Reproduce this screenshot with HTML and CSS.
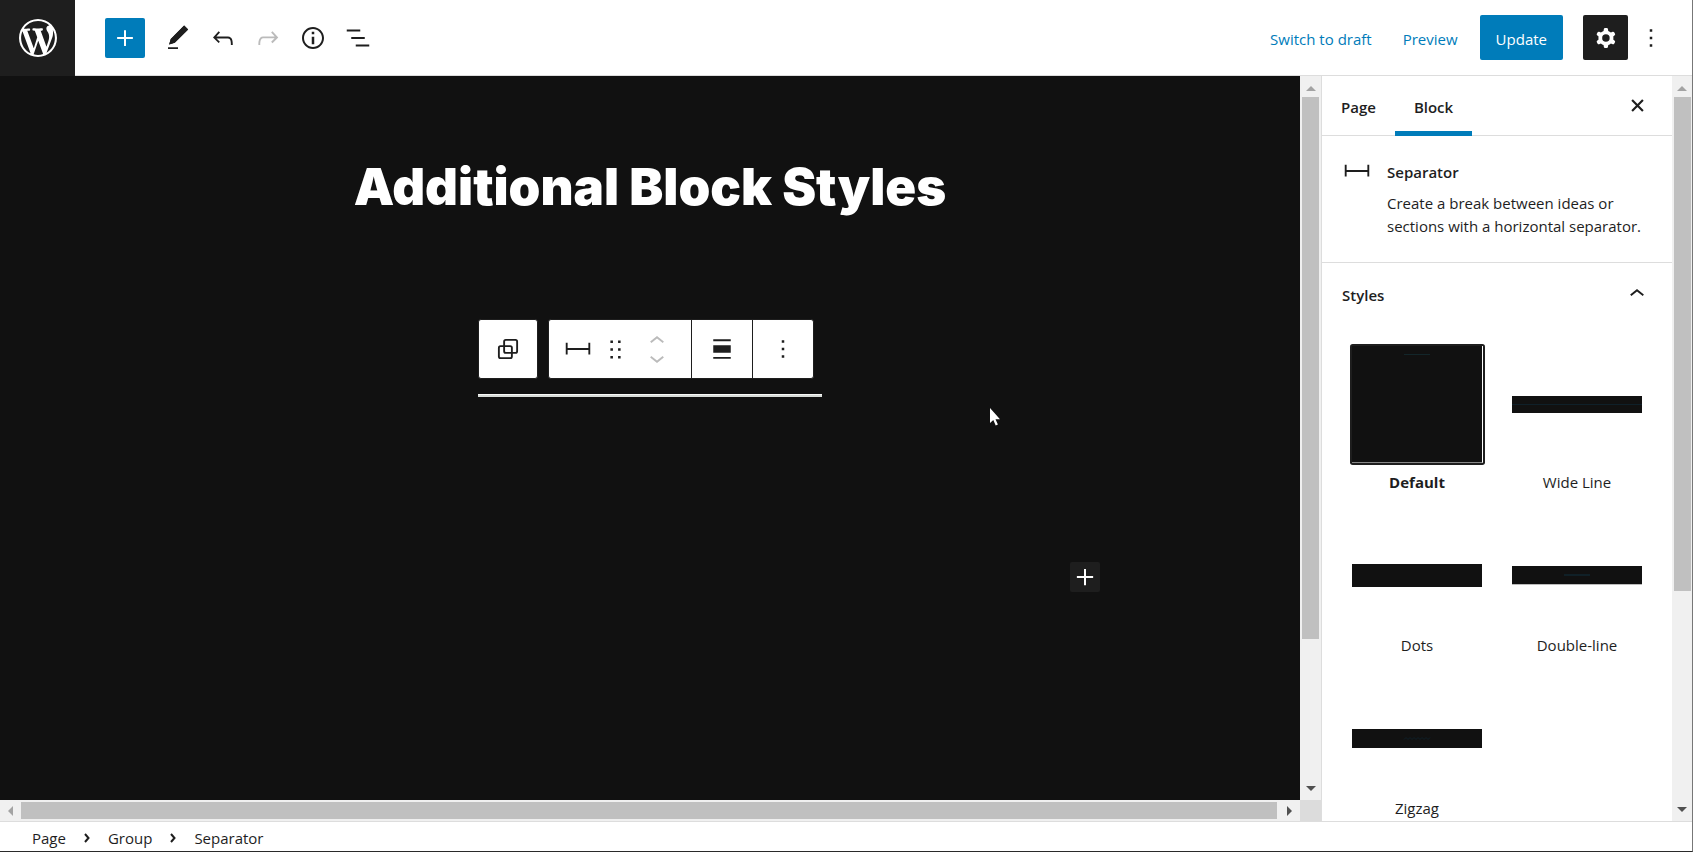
FILE: index.html
```html
<!DOCTYPE html>
<html lang="en">
<head>
<meta charset="utf-8">
<title>Edit Page</title>
<link rel="stylesheet" href="styles.css">
</head>
<body>
<div class="editor">
  <header class="header">
    <a class="logo" href="#" aria-label="View pages">
      <svg viewBox="0 0 20 20"><path d="M20 10c0-5.51-4.49-10-10-10C4.48 0 0 4.49 0 10c0 5.52 4.48 10 10 10 5.51 0 10-4.48 10-10zM7.78 15.37L4.37 6.22c.55-.02 1.17-.08 1.17-.08.5-.06.44-1.13-.06-1.11 0 0-1.45.11-2.37.11-.18 0-.37 0-.58-.01C4.12 2.69 6.87 1.11 10 1.11c2.33 0 4.45.87 6.05 2.34-.68-.11-1.65.39-1.65 1.58 0 .74.45 1.36.9 2.1.35.61.55 1.36.55 2.46 0 1.49-1.4 5-1.4 5l-3.03-8.37c.54-.02.82-.17.82-.17.5-.05.44-1.25-.06-1.22 0 0-1.44.12-2.38.12-.87 0-2.33-.12-2.33-.12-.5-.03-.56 1.2-.06 1.22l.92.08 1.26 3.41zM17.41 10c.24-.64.74-1.87.43-4.25.7 1.29 1.05 2.71 1.05 4.25 0 3.29-1.73 6.24-4.4 7.78.97-2.59 1.94-5.2 2.92-7.78zM6.1 18.09C3.12 16.65 1.11 13.53 1.11 10c0-1.3.23-2.48.72-3.59C3.25 10.3 4.67 14.2 6.1 18.09zm4.03-6.63l2.58 6.98c-.86.29-1.76.45-2.71.45-.79 0-1.57-.11-2.29-.33.81-2.38 1.62-4.74 2.42-7.1z"/></svg>
    </a>
    <div class="tools">
      <button class="add" aria-label="Toggle block inserter"><svg class="icon" viewBox="0 0 24 24"><path d="M18.300 11.200h-5.500V5.800h-1.600v5.400H5.700v1.600h5.500v5.500h1.600v-5.500h5.500z"/></svg></button>
      <button class="tool" aria-label="Tools"><svg class="icon" viewBox="0 0 24 24"><path d="M20.100 5.100L16.900 2 6.200 12.700l-1.300 4.400 4.500-1.300L20.100 5.100zM4 20.800h8v-1.500H4v1.500z"/><path d="M16.900 2l3.200 3.100L9.400 15.800l-4.500 1.300 1.300-4.400z"/></svg></button>
      <button class="tool" aria-label="Undo"><svg class="icon" viewBox="0 0 24 24"><path d="M18.300 11.700c-.6-.6-1.400-.9-2.300-.9H6.700l2.900-3.300-1.100-1-4.500 5L8.500 16l1-1-2.700-2.700H16c.5 0 .9.2 1.300.5 1 1 1 3.400 1 4.500v.3h1.500v-.2c0-1.500 0-4.300-1.500-5.700z"/></svg></button>
      <button class="tool" aria-label="Redo" disabled><svg class="icon" viewBox="0 0 24 24"><path d="M15.600 6.500l-1.100 1 2.900 3.300H8c-.9 0-1.700.3-2.300.9-1.400 1.500-1.400 4.200-1.400 5.600v.2h1.500v-.3c0-1.100 0-3.500 1-4.500.3-.3.7-.5 1.300-.5h9.200L14.500 15l1.100 1.100 4.600-4.600-4.600-5z"/></svg></button>
      <button class="tool" aria-label="Details"><svg class="icon" viewBox="0 0 24 24"><path d="M12 3.200c-4.800 0-8.800 3.900-8.800 8.800 0 4.800 3.900 8.800 8.800 8.800 4.800 0 8.800-3.900 8.800-8.800 0-4.800-4-8.800-8.800-8.800zm0 16c-4 0-7.200-3.300-7.200-7.200C4.800 8 8 4.800 12 4.800s7.200 3.300 7.200 7.200c0 4-3.200 7.200-7.200 7.200zM11 17h2v-6h-2v6zm0-8h2V7h-2v2z"/></svg></button>
      <button class="tool" aria-label="List view"><svg class="icon" viewBox="0 0 24 24"><path d="M13.800 5.200H3v1.500h10.800V5.200zm-3.600 12v1.500H21v-1.500H10.200zm7.200-6H6.600v1.500h10.800v-1.500z"/></svg></button>
    </div>
    <div class="settings">
      <button class="text-button">Switch to draft</button>
      <button class="text-button">Preview</button>
      <button class="primary">Update</button>
      <button class="gear" aria-label="Settings"><svg class="icon" viewBox="0 0 24 24"><path fill-rule="evenodd" d="M10.289 4.836A1 1 0 0111.275 4h1.306a1 1 0 01.987.836l.244 1.466c.787.26 1.503.679 2.108 1.218l1.393-.522a1 1 0 011.216.437l.653 1.130a1 1 0 01-.23 1.273l-1.148.944a6.025 6.025 0 010 2.435l1.149.946a1 1 0 01.23 1.272l-.653 1.130a1 1 0 01-1.216.437l-1.394-.522c-.605.540-1.320.958-2.108 1.218l-.244 1.466a1 1 0 01-.987.836h-1.306a1 1 0 01-.986-.836l-.244-1.466a5.995 5.995 0 01-2.108-1.218l-1.394.522a1 1 0 01-1.217-.436l-.653-1.131a1 1 0 01.23-1.272l1.149-.946a6.026 6.026 0 010-2.435l-1.148-.944a1 1 0 01-.23-1.272l.653-1.131a1 1 0 011.217-.437l1.393.522a5.994 5.994 0 012.108-1.218l.244-1.466zM14.929 12a3 3 0 11-6 0 3 3 0 016 0z"/></svg></button>
      <button class="more" aria-label="Options"><svg class="icon" viewBox="0 0 24 24"><path d="M13 19h-2v-2h2v2zm0-6h-2v-2h2v2zm0-6h-2V5h2v2z"/></svg></button>
    </div>
  </header>

  <div class="body">
    <div class="frame">
      <main class="canvas">
        <h1 class="title">Additional Block Styles</h1>
        <section class="block">
          <div class="toolbar">
            <div class="group">
              <button class="cell" aria-label="Select parent block: Group"><svg class="icon" viewBox="0 0 24 24"><g fill="none" stroke="#1e1e1e" stroke-width="1.500"><rect x="8.900" y="4.700" width="10.400" height="10.400" rx="1.300"/><rect x="4.700" y="9.700" width="10.400" height="9.600" rx="1.300"/></g></svg></button>
            </div>
            <div class="group">
              <div class="cell mover">
                <button class="tool" aria-label="Separator"><svg class="icon" viewBox="0 0 24 24"><path d="M20.300 7v4.200H3.700V7H2.200v9.300h1.500v-3.600h16.600v3.600h1.500V7z"/></svg></button>
                <button class="drag" aria-label="Drag"><svg viewBox="0 0 18 18"><path d="M5 4h2V2H5v2zm6-2v2h2V2h-2zm-6 8h2V8H5v2zm6 0h2V8h-2v2zm-6 6h2v-2H5v2zm6 0h2v-2h-2v2z"/></svg></button>
                <div class="arrows">
                  <button class="arrow" aria-label="Move up" disabled><svg viewBox="0 2.400 24 16"><path d="M6.500 12.400L12 8l5.500 4.400-.9 1.200L12 10l-4.500 3.600-1-1.200z"/></svg></button>
                  <button class="arrow" aria-label="Move down" disabled><svg viewBox="0 4.800 24 16"><path d="M17.500 11.600L12 16l-5.500-4.400.9-1.200L12 14l4.500-3.600 1 1.200z"/></svg></button>
                </div>
              </div>
              <button class="cell" aria-label="Align"><svg class="icon" viewBox="0 0 24 24"><path d="M5 15h14V9H5v6zm0 4.800h14v-1.500H5v1.500zM5 4.200v1.500h14V4.200H5z"/></svg></button>
              <button class="cell" aria-label="Options"><svg class="icon" viewBox="0 0 24 24"><path d="M13 19h-2v-2h2v2zm0-6h-2v-2h2v2zm0-6h-2V5h2v2z"/></svg></button>
            </div>
          </div>
          <hr class="rule">
        </section>
        <div class="appender">
          <button class="append" aria-label="Add block"><svg class="icon" viewBox="0 0 24 24"><path d="M18.500 11.200h-5.700V5.500h-1.600v5.700H5.500v1.600h5.700v5.700h1.600v-5.700h5.700z"/></svg></button>
        </div>
        <svg class="cursor" viewBox="0 0 12 18"><path d="M1 0v15l3.300-3 2.400 5.500 2.200-1-2.400-5.200H11z" fill="#fff"/></svg>
      </main>
      <div class="scroll vertical"><i class="tip up"></i><div class="track"><div class="thumb canvas-thumb"></div></div><i class="tip down"></i></div>
      <div class="scroll horizontal"><i class="tip left"></i><div class="thumb wide-thumb"></div><i class="tip right"></i></div>
      <div class="corner"></div>
    </div>

    <aside class="sidebar">
      <div class="panel">
        <div class="tabs">
          <button class="tab">Page</button>
          <button class="tab active">Block</button>
          <button class="close" aria-label="Close settings"><svg viewBox="0 0 12 12"><path d="M1 1l10 10M11 1L1 11"/></svg></button>
        </div>
        <div class="card">
          <svg class="icon" viewBox="0 0 24 24"><path d="M20.300 7v4.200H3.700V7H2.200v9.300h1.500v-3.600h16.600v3.600h1.500V7z"/></svg>
          <div class="card-text">
            <h2 class="card-title">Separator</h2>
            <p class="card-copy">Create a break between ideas or sections with a horizontal separator.</p>
          </div>
        </div>
        <button class="section-title">Styles<svg class="icon" viewBox="0 0 24 24"><path d="M6.500 12.400L12 8l5.500 4.400-.9 1.200L12 10l-4.500 3.600-1-1.200z"/></svg></button>
        <div class="styles">
          <button class="style selected"><span class="preview"><span class="sample"><svg viewBox="0 0 130 117"><path d="M52 8.500h26" stroke="#13262a"/></svg></span></span><span class="name">Default</span></button>
          <button class="style"><span class="preview"><span class="sample wide"><svg viewBox="0 0 130 17"><path d="M0 8.500h130" stroke="#0f2029"/></svg></span></span><span class="name">Wide Line</span></button>
          <button class="style"><span class="preview"><span class="sample dots"></span></span><span class="name">Dots</span></button>
          <button class="style"><span class="preview"><span class="sample double"><svg viewBox="0 0 130 18"><path d="M52 9h26" stroke="#102027" stroke-width="2"/></svg></span></span><span class="name">Double-line</span></button>
          <button class="style"><span class="preview"><span class="sample zigzag"><svg viewBox="0 0 130 19"><path d="M52 10.500l2-2 2 2 2-2 2 2 2-2 2 2 2-2 2 2 2-2 2 2 2-2 2 2 2-2" fill="none" stroke="#0f2029"/></svg></span></span><span class="name">Zigzag</span></button>
        </div>
      </div>
      <div class="scroll vertical"><i class="tip up"></i><div class="track"><div class="thumb side-thumb"></div></div><i class="tip down"></i></div>
    </aside>
  </div>

  <footer class="footer">
    <nav class="crumbs" aria-label="Block breadcrumb">
      <a href="#">Page</a>
      <svg class="crumb-sep" viewBox="0 0 6 10"><path d="M1 1l3.500 4L1 9"/></svg>
      <a href="#">Group</a>
      <svg class="crumb-sep" viewBox="0 0 6 10"><path d="M1 1l3.500 4L1 9"/></svg>
      <a href="#">Separator</a>
    </nav>
  </footer>
</div>
</body>
</html>
```
FILE: styles.css
```css
* { box-sizing: border-box; }

body {
  margin: 0;
  background: #fff;
  color: #1e1e1e;
  font: 15px/23px "Open Sans", "Noto Sans", sans-serif;
}

button {
  display: flex;
  align-items: center;
  justify-content: center;
  margin: 0;
  padding: 0;
  border: 0;
  background: none;
  color: inherit;
  font: inherit;
}

a { color: inherit; text-decoration: none; }
svg { display: block; fill: currentColor; }
.icon { width: 30px; height: 30px; flex: none; }

.editor {
  display: flex;
  flex-direction: column;
  height: 100vh;
  border-right: 1px solid #777;
  border-bottom: 1px solid #2a2a2a;
}

/* Header */
.header {
  display: flex;
  align-items: center;
  flex: none;
  height: 76px;
  border-bottom: 1px solid #ddd;
}
.logo {
  display: flex;
  align-items: center;
  justify-content: center;
  width: 75px;
  height: 76px;
  background: #1e1e1e;
  color: #fff;
}
.logo svg { width: 38px; height: 38px; }
.tools { display: flex; align-items: center; gap: 15px; margin-left: 30px; }
.add {
  width: 40px;
  height: 40px;
  margin-right: 3px;
  border-radius: 2px;
  background: #007cba;
  color: #fff;
}
.tool:disabled { color: #bbb; }
.settings { display: flex; align-items: center; margin-left: auto; padding-right: 26px; }
.text-button { height: 45px; margin-right: 31px; padding-top: 3px; color: #007cba; }
.text-button + .primary { margin-left: -9px; }
.primary {
  height: 45px;
  padding: 3px 16px 0;
  border-radius: 2px;
  background: #007cba;
  color: #fff;
}
.gear {
  width: 45px;
  height: 45px;
  margin: 0 8px 0 20px;
  border-radius: 2px;
  background: #1e1e1e;
  color: #fff;
}

/* Canvas */
.body { display: flex; flex: 1; min-height: 0; }
.frame {
  display: grid;
  grid-template: 1fr 21px / 1fr 21px;
  flex: 1;
  min-width: 0;
}
.canvas {
  position: relative;
  display: flex;
  flex-direction: column;
  align-items: center;
  padding-top: 74px;
  background: #111;
  overflow: hidden;
}
.title {
  margin: 0 0 96px;
  color: #fff;
  font: 900 51px/73px Inter, "Open Sans", sans-serif;
}
.block { width: 344px; }
.toolbar { display: flex; gap: 10px; }
.group {
  display: flex;
  flex: none;
  border: 1px solid #1e1e1e;
  border-radius: 3px;
  background: #fff;
  overflow: hidden;
}
.cell { width: 60px; height: 58px; }
.group > .cell:first-child:last-child { width: 58px; }
.cell + .cell { width: 61px; border-left: 1px solid #1e1e1e; }
.cell.mover {
  display: flex;
  align-items: center;
  width: 142px;
  padding-left: 14px;
}
.drag { margin: 0 15px 0 11px; }
.drag svg { width: 23px; height: 23px; }
.arrow { color: #bbb; }
.arrow svg { width: 30px; height: 20px; }
.rule {
  height: 3px;
  margin: 15px 0 0;
  border: 0;
  border-top: 1px solid #f8f8f8;
  background: #d8dcd8;
}
.appender {
  display: flex;
  justify-content: flex-end;
  width: 900px;
  max-width: 100%;
  margin-top: 165px;
}
.append { border-radius: 2px; background: #1e1e1e; color: #fff; }
.cursor { position: absolute; left: 989px; top: 332px; width: 12px; height: 18px; }

/* Scrollbars */
.scroll { display: flex; background: #f0f0f0; }
.scroll.vertical { flex-direction: column; align-items: center; width: 21px; }
.scroll.horizontal { align-items: center; height: 21px; }
.track { flex: 1; width: 17px; }
.thumb { background: #c0c0c0; }
.canvas-thumb { height: 79.4%; }
.side-thumb { height: 70.3%; }
.wide-thumb { flex: 1; height: 17px; margin-right: 2px; }
.tip { display: flex; align-items: center; justify-content: center; width: 21px; height: 21px; flex: none; }
.tip::before { content: ""; border: 5px solid transparent; }
.tip.up { padding-top: 3px; }
.tip.up::before { border-top-width: 0; border-bottom-color: #a3a3a3; }
.tip.down { padding-bottom: 3px; }
.tip.down::before { border-bottom-width: 0; border-top-color: #505050; }
.tip.left::before { border-left-width: 0; border-right-color: #a3a3a3; }
.tip.right::before { border-right-width: 0; border-left-color: #505050; }
.corner { background: #dcdcdc; }

/* Sidebar */
.sidebar { display: flex; flex: none; width: 371px; border-left: 1px solid #ddd; }
.sidebar .scroll.vertical { width: 20px; flex: none; }
.panel { flex: 1; min-width: 0; overflow: hidden; }
.tabs { display: flex; height: 60px; border-bottom: 1px solid #ddd; }
.tab { height: 60px; padding: 2px 19px 0; font-weight: 600; }
.tab.active { box-shadow: inset 0 -5px #007cba; }
.close { width: 30px; margin: 0 20px 0 auto; }
.close svg { width: 13px; height: 13px; stroke: #1e1e1e; stroke-width: 2; }
.card {
  display: flex;
  gap: 15px;
  padding: 25px 20px 24px;
  border-bottom: 1px solid #ddd;
}
.card > .icon { margin-top: -5px; }
.card-title { margin: 0 0 8px; font-size: 15px; line-height: 23px; font-weight: 600; }
.card-copy { margin: 0; }
.section-title {
  justify-content: space-between;
  width: 100%;
  height: 63px;
  padding: 2px 20px 0;
  font-weight: 600;
}
.section-title .icon { margin-bottom: 3px; }
.styles {
  display: grid;
  grid-template-columns: 1fr 1fr;
  gap: 25px 10px;
  padding: 20px;
}
.style { flex-direction: column; justify-content: flex-start; }
.preview {
  display: flex;
  flex: 1;
  align-items: center;
  justify-content: center;
  min-height: 101px;
}
.name { padding: 8px 0 6px; }
.sample { display: block; width: 130px; height: 117px; background: #111; }
.sample svg { width: 130px; height: auto; }
.selected .preview { border-radius: 1px; box-shadow: 0 0 0 2px #1e1e1e; }
.selected .sample { width: 131px; border-right: 1px solid #fff; border-bottom: 1px solid #888; }
.selected .name { font-weight: 700; }
.sample.wide { height: 17px; }
.sample.dots { height: 23px; }
.sample.double { height: 19px; border-bottom: 1px solid #bbb; }
.sample.zigzag { height: 19px; }

/* Footer */
.footer { flex: none; height: 30px; border-top: 1px solid #ddd; }
.crumbs { display: flex; align-items: center; height: 32px; padding-left: 32px; }
.crumb-sep {
  width: 6px;
  height: 10px;
  margin: 0 18px;
  fill: none;
  stroke: #1e1e1e;
  stroke-width: 2;
}
```
